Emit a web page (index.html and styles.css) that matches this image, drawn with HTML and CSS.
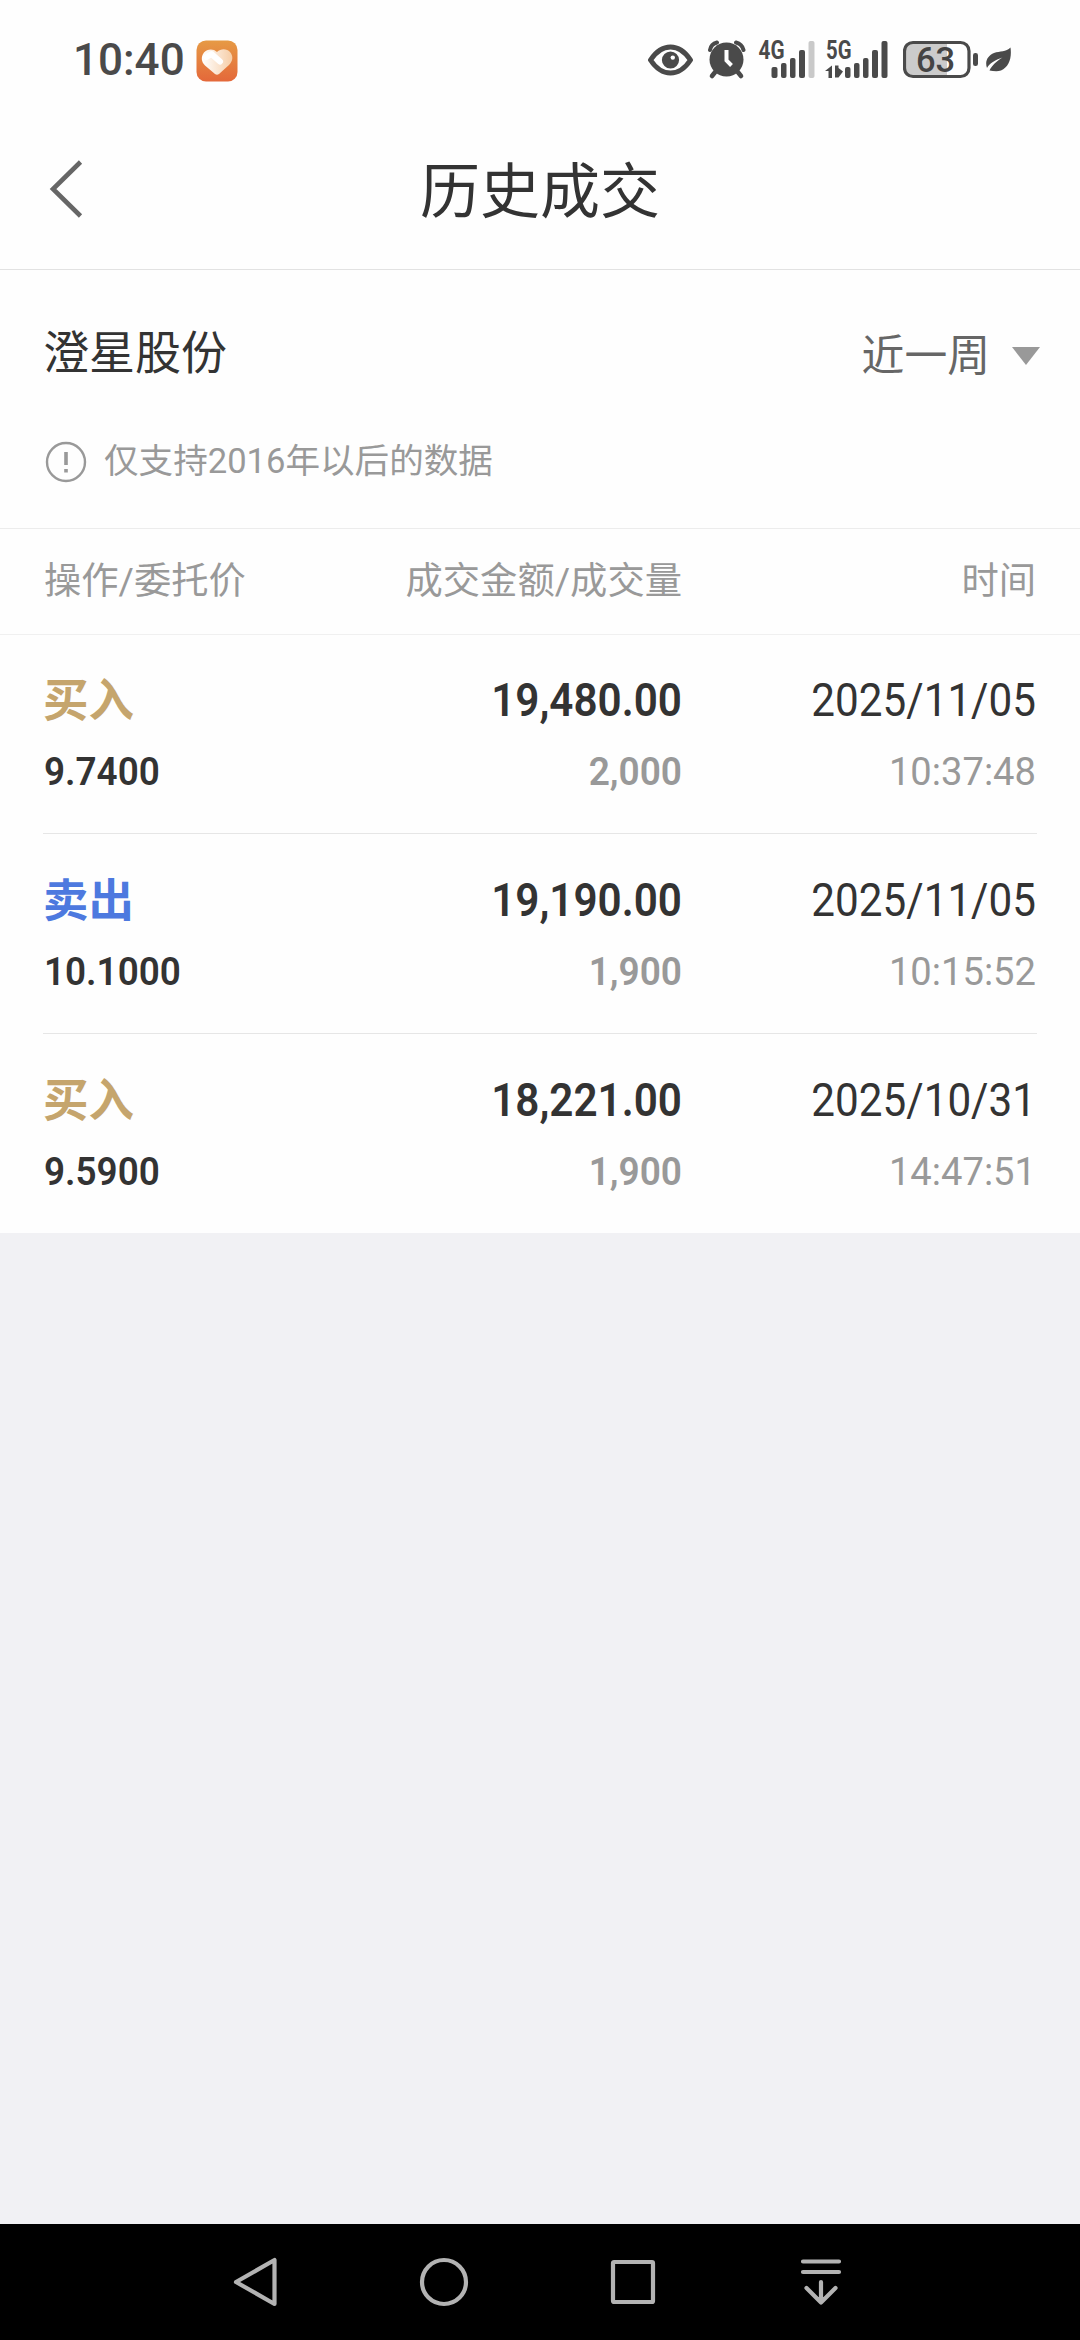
FILE: index.html
```html
<!DOCTYPE html>
<html lang="zh-CN">
<head>
<meta charset="utf-8">
<title>历史成交</title>
<link rel="stylesheet" href="styles.css">
</head>
<body>
<div class="screen">
  <header class="status">
    <span class="clock">10:40</span>
    <svg class="app-badge" width="42" height="42" viewBox="0 0 42 42">
      <defs>
        <linearGradient id="orange" x1="0" y1="0" x2="0" y2="1"><stop offset="0" stop-color="#e69a45"/><stop offset="1" stop-color="#e4683a"/></linearGradient>
        <linearGradient id="cream" x1="0" y1="0" x2="1" y2="0"><stop offset="0" stop-color="#fff"/><stop offset="1" stop-color="#f6cda6"/></linearGradient>
      </defs>
      <rect x=".5" y=".5" width="41" height="41" rx="9.5" fill="url(#orange)"/>
      <path d="M21 12C17 8 11 9 8 12.500C4.500 17 5.500 22 9 25.500L19 34Q21 35.500 23 34L33 25C37 21 37.500 16 34 12C31 8.500 25 8 21 12Z" fill="url(#cream)"/>
      <path d="M10.500 17L15.500 14L24 21.500" fill="none" stroke="#fff" stroke-width="6" stroke-linecap="round" stroke-linejoin="round"/>
    </svg>
    <div class="status-icons">
      <svg width="46" height="60" viewBox="648 30 46 60">
        <path d="M650.500 60Q659 47 670.500 47T690.500 60Q682 73 670.500 73T650.500 60Z" fill="none" stroke="#4a4a4a" stroke-width="5" stroke-linejoin="round"/>
        <circle cx="670.500" cy="60" r="8.600" fill="#4a4a4a"/><circle cx="672.800" cy="57.600" r="2.200" fill="#fff"/>
      </svg>
      <svg width="38" height="60" viewBox="708 30 38 60">
        <g fill="none" stroke="#4a4a4a" stroke-linecap="round"><path d="M710 50Q711 44 717 42.500M736 42.500Q742 44 743.500 50" stroke-width="4"/><path d="M716 71L712 76M737 71L741 76" stroke-width="4.600"/></g>
        <circle cx="726.500" cy="59.500" r="17" fill="#4a4a4a"/>
        <path d="M726.500 50V60.500L731.500 65.500" fill="none" stroke="#fff" stroke-width="4"/>
      </svg>
      <svg width="57" height="60" viewBox="758 30 57 60">
        <text class="net" x="758.500" y="59" textLength="26" lengthAdjust="spacingAndGlyphs">4G</text>
        <g fill="#4a4a4a"><rect x="771.500" y="67" width="6" height="11" rx="2"/><rect x="781" y="63" width="5.500" height="15" rx="2"/><rect x="790" y="58" width="5.500" height="20" rx="2"/><rect x="799" y="50" width="6" height="28" rx="2"/></g>
        <rect x="808.500" y="41" width="6" height="37" rx="2" fill="#c9c9c9"/>
      </svg>
      <svg width="64" height="60" viewBox="824 30 64 60">
        <text class="net" x="826" y="59" textLength="25.500" lengthAdjust="spacingAndGlyphs">5G</text>
        <g fill="#4a4a4a"><path d="M825 71L832 65.500V78H828.500V71ZM835 65.500H838.500V68L843 71.500L838.500 77.500H835Z"/><rect x="845" y="67" width="5.500" height="11" rx="2"/><rect x="854" y="63" width="5.500" height="15" rx="2"/><rect x="863" y="58" width="5.500" height="20" rx="2"/><rect x="872" y="50" width="6" height="28" rx="2"/><rect x="881.500" y="41" width="6" height="37" rx="2"/></g>
      </svg>
      <svg width="76" height="60" viewBox="903 30 76 60">
        <path d="M914 42H947V77H914Q905 77 905 68V51Q905 42 914 42Z" fill="#cbcbcb"/>
        <rect x="904.500" y="42.500" width="64.500" height="34" rx="8.500" fill="none" stroke="#4a4a4a" stroke-width="3.200"/>
        <rect x="973" y="53" width="5" height="13" rx="2.300" fill="#4a4a4a"/>
        <text class="level" x="916" y="71.500" textLength="39">63</text>
      </svg>
      <svg width="26" height="60" viewBox="986 30 26 60">
        <path d="M1010.500 47.500C1012 58 1009 67 1001 70.500C997 72 993 71 989.500 70.500C992 65 997 61 1002.500 57.500C995 60 989.500 63.500 987 68C984.500 61 988 55.500 994 53C1000 51 1006 52 1010.500 47.500Z" fill="#4a4a4a"/>
      </svg>
    </div>
  </header>

  <nav class="titlebar">
    <svg class="back" width="36" height="60" viewBox="0 0 36 60"><path d="M32.500 3L5 30L32.500 57" fill="none" stroke="#666" stroke-width="4.600"/></svg>
    <h1>历史成交</h1>
  </nav>

  <main>
    <section class="filter">
      <div class="filter-row">
        <span class="stock">澄星股份</span>
        <span class="range">近一周<svg width="28" height="18" viewBox="0 0 28 18"><path d="M0 0H28L14 18Z" fill="#999"/></svg></span>
      </div>
      <div class="hint">
        <svg width="42" height="42" viewBox="0 0 42 42"><circle cx="21" cy="21" r="19" fill="none" stroke="#999" stroke-width="2.400"/><path d="M21 11V24M21 28V31.500" stroke="#999" stroke-width="3.600"/></svg>
        <span>仅支持2016年以后的数据</span>
      </div>
    </section>

    <div class="table-head"><span>操作/委托价</span><span>成交金额/成交量</span><span>时间</span></div>

    <section class="trades">
      <div class="trade">
        <span class="side buy">买入</span><span class="amount">19,480.00</span><span class="date">2025/11/05</span>
        <span class="price">9.7400</span><span class="volume">2,000</span><span class="time">10:37:48</span>
      </div>
      <div class="trade">
        <span class="side sell">卖出</span><span class="amount">19,190.00</span><span class="date">2025/11/05</span>
        <span class="price">10.1000</span><span class="volume">1,900</span><span class="time">10:15:52</span>
      </div>
      <div class="trade">
        <span class="side buy">买入</span><span class="amount">18,221.00</span><span class="date">2025/10/31</span>
        <span class="price">9.5900</span><span class="volume">1,900</span><span class="time">14:47:51</span>
      </div>
    </section>
  </main>

  <footer class="sysnav">
    <svg width="54" height="54" viewBox="0 0 54 54"><path d="M45.500 5V49L7 27Z"/></svg>
    <svg width="54" height="54" viewBox="0 0 54 54"><circle cx="27" cy="27" r="22"/></svg>
    <svg width="54" height="54" viewBox="0 0 54 54"><rect x="7" y="7" width="40" height="40" rx="1"/></svg>
    <svg width="54" height="54" viewBox="0 0 54 54"><path d="M9 6.500H45M9 17H45M27 27V47M12.500 33L27 47.500L41.500 33"/></svg>
  </footer>
</div>
</body>
</html>
```
FILE: styles.css
```css
* { box-sizing: border-box; }
body { margin: 0; }
.screen {
  width: 1080px;
  height: 2340px;
  display: flex;
  flex-direction: column;
  background: #f1f1f4;
  color: #333;
  font-family: Roboto, "Noto Sans CJK SC", sans-serif;
}
svg { display: block; flex: none; }

.status {
  height: 120px;
  padding: 0 68px 0 73px;
  display: flex;
  align-items: center;
  background: #fefefe;
}
.clock { width: 123px; font-size: 44px; line-height: 120px; font-weight: 500; color: #4a4a4a; white-space: nowrap; }
.app-badge { margin-top: 1px; }
.status-icons { display: flex; margin-left: auto; }
.status-icons svg + svg { margin-left: 14px; }
.status-icons svg:nth-child(3) { margin-left: 12px; }
.status-icons svg:nth-child(4) { margin-left: 9px; }
.status-icons svg:nth-child(5) { margin-left: 15px; }
.status-icons svg:nth-child(6) { margin-left: 7px; }
.net { font: 700 25px Roboto, sans-serif; fill: #4a4a4a; }
.level { font: 500 34.5px Roboto, sans-serif; fill: #444; }

.titlebar {
  height: 150px;
  padding: 0 48px;
  display: grid;
  grid-template-columns: 1fr auto 1fr;
  align-items: center;
  background: #fefefe;
  border-bottom: 1px solid #e2e2e2;
}
.back { margin-bottom: 12px; }
.titlebar h1 { margin: 0 0 4px; font-size: 60px; line-height: 90px; font-weight: 400; }

.filter { height: 258px; padding: 47px 40px 0 43px; background: #fefefe; }
.filter-row { height: 72px; display: flex; justify-content: space-between; align-items: center; }
.stock { font-size: 46px; line-height: 72px; }
.range { display: flex; align-items: center; gap: 22px; padding-top: 5px; font-size: 42.8px; line-height: 72px; color: #666; }
.hint { display: flex; align-items: center; gap: 17px; margin-top: 42px; padding-left: 2px; font-size: 34.6px; line-height: 60px; color: #999; }
.hint svg { margin-top: 1px; }

.table-head {
  height: 107px;
  padding: 0 44px;
  display: grid;
  grid-template-columns: 300px 338px 1fr;
  font-size: 37.3px;
  line-height: 105px;
  color: #999;
  background: #fefefe;
  border-top: 1px solid #ececec;
  border-bottom: 1px solid #f0f0f0;
}
.table-head span:not(:first-child) { text-align: right; }

.trades { padding: 0 43px; background: #fefefe; }
.trade {
  height: 200px;
  padding: 30px 1px 0;
  display: grid;
  grid-template-columns: 300px 338px 1fr;
  grid-template-rows: 72px 72px;
  line-height: 72px;
  border-bottom: 1px solid #e6e6e6;
}
.trade:first-child { height: 199px; padding-top: 29px; }
.trade:last-child { height: 199px; border-bottom: 0; }
.side { margin-left: -1px; font-size: 45.5px; font-weight: 700; line-height: 75px; }
.buy { color: #c5a56d; }
.sell { color: #4d79df; }
.amount, .date { font-size: 46px; text-align: right; transform: scaleX(.918); transform-origin: right; }
.price, .volume, .time { font-size: 39px; }
.amount, .price, .volume { font-weight: 600; }
.price { transform: scaleX(.945); transform-origin: left; }
.volume, .time { color: #999; text-align: right; transform: scaleX(.95); transform-origin: right; }
.time { transform: scaleX(.978); }

.sysnav {
  height: 116px;
  margin-top: auto;
  padding: 0 232px 0 229px;
  display: flex;
  justify-content: space-between;
  align-items: center;
  background: #000;
}
.sysnav svg { fill: none; stroke: #b3b3b3; stroke-width: 4.2; stroke-linecap: round; stroke-linejoin: round; }
```
